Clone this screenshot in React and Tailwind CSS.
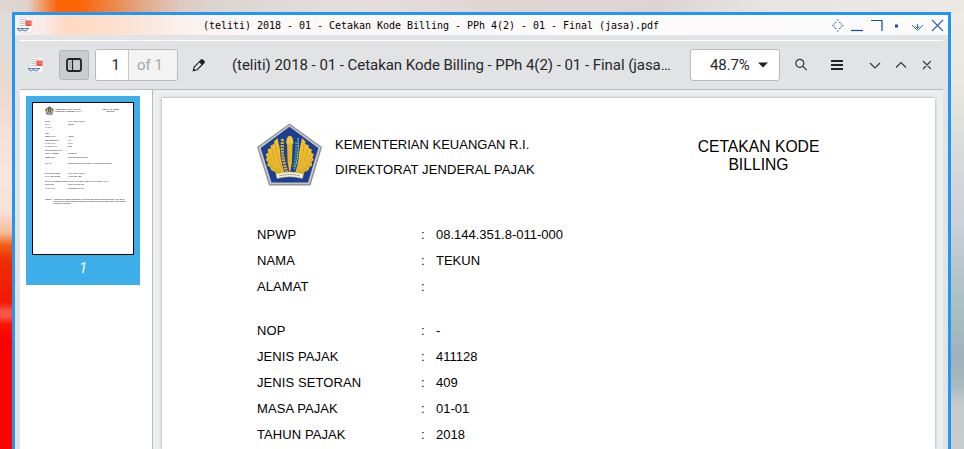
import React from "react";

const rows = [
  ["NPWP", "08.144.351.8-011-000"],
  ["NAMA", "TEKUN"],
  ["ALAMAT", ""],
  null,
  ["NOP", "-"],
  ["JENIS PAJAK", "411128"],
  ["JENIS SETORAN", "409"],
  ["MASA PAJAK", "01-01"],
  ["TAHUN PAJAK", "2018"],
];

function Emblem({ className }) {
  const wing = (
    <>
      <path
        d="M20.500 15 17 18.500 17.300 21 13.500 22.500 14 25 10.500 26.500 11.300 29.500 8.500 31.500 10 34 8.800 37 11 39 10.300 42.500 13 44 14 47 18 49 20 52.500H31L26.500 44 24 31Z"
        fill="#f0be2c"
      />
      <path
        d="M18.500 21.500q.5 15 9.500 29M15 26q1.500 14 12 25M12 31q3 11.500 14 20M11 36q4 9 14 15.500M12 41q4 6 12 10.500"
        fill="none"
        stroke="#a58a30"
        strokeWidth=".5"
      />
    </>
  );
  return (
    <svg viewBox="0 0 66 64" className={className}>
      <path d="M32.500.5 65 24 53.500 62.500H12L0 24Z" fill="#8f9194" />
      <path d="M32.500 2 63.500 24.500 52.500 61H13L1.500 24.500Z" fill="#c5c7c9" />
      <path d="M32.500 3.800 61.300 25 51 59.500H14.500L3.700 25Z" fill="#1c3f8f" />
      {wing}
      <g transform="translate(65.500 0) scale(-1 1)">{wing}</g>
      <path d="M25.500 17q-1.500 18 4.500 32" fill="none" stroke="#1c3f8f" strokeWidth="4.600" />
      <path d="M25.500 16q-1.500 18 4.500 33" fill="none" stroke="#d5ae45" strokeWidth="3.200" strokeDasharray="2 .9" />
      <path d="M40 17q1 18-4 32" fill="none" stroke="#1c3f8f" strokeWidth="4.600" />
      <path d="M41 15q1.300 19-4 32" fill="none" stroke="#e6f0d8" strokeWidth="1" strokeDasharray="1.500 .8" />
      <path d="M39.300 19q.5 14-3 26" fill="none" stroke="#2fa07b" strokeWidth="2.200" strokeDasharray="2 .9" />
      <path d="M30 18h5.600l-.6 21-2.200 12-2.200-12Z" fill="#f0b925" />
      <path d="M29 20.500 30 15q2.800-4.500 5.600 0l1 5.500Z" fill="#f3c63a" />
      <path d="M31.800 22v18M34 22v18" stroke="#d29c1c" strokeWidth=".4" />
      <path d="M19 51q13.500-4 27.500 0l-1 4.500q-12.800-3.500-25.500 0Z" fill="#f4f1dc" stroke="#c9a84c" strokeWidth=".5" />
      <path d="M22.500 52.800q10.500-2.500 20.500 0" fill="none" stroke="#777" strokeWidth="1" strokeDasharray="1.200 .5" />
    </svg>
  );
}

function ViewerIcon({ className }) {
  return (
    <svg viewBox="0 0 16 16" className={className}>
      <rect x="2" y=".5" width="13" height="15" rx=".6" fill="#f7f7f7" stroke="#dedede" strokeWidth=".5" />
      <path d="M3 2.500h6M3 4.500h5M3 6.500h5M3 8.500h5" stroke="#b9b9b9" strokeWidth=".8" />
      <rect x="8.500" y="3.500" width="6" height="5.500" fill="#ea5548" />
      <path d="M10 7.500l2-3 1.500 3" fill="none" stroke="#f7b5ae" strokeWidth=".6" />
      <path d="M0 11.500h12" stroke="#416da8" strokeWidth="1" />
      <path d="M1 11.700q0 2.300 2 2.300t2.500-2.300q0 2.300 2.500 2.300t2.500-2.300" fill="#d5e4f5" stroke="#416da8" strokeWidth=".8" />
    </svg>
  );
}

function TitleBar() {
  return (
    <div className="relative flex h-5 shrink-0 items-center justify-between bg-[linear-gradient(90deg,#f7f3f2_0px,#f8eae5_30px,#ffd9c3_50px,#ffdcc9_80px,#fbe5d9_125px,#faf1ed_170px,#fcf9f8_240px,#fbf8f7_380px,#fdfcfb_550px,#fbfbfa_933px)]">
      <ViewerIcon className="ml-0.5 h-4 w-4" />
      <span className="absolute left-[188px] top-0 whitespace-pre font-['DejaVu_Sans_Mono',monospace] text-[10px] leading-[21px] tracking-[-0.02px] text-black">
        (teliti) 2018 - 01 - Cetakan Kode Billing - PPh 4(2) - 01 - Final (jasa).pdf
      </span>
      <svg width="114" height="13" viewBox="0 0 114 13" className="mr-[3px]" fill="none" stroke="#124ba5">
        <path
          d="M6 1h1.500M6 12h1.500M1 6.500h1.500M11 6.500h1.500M4 3.500h1.500M8 3.500h1.500M4 9.500h1.500M8 9.500h1.500M2.500 5H4M9.500 5H11M2.500 8H4M9.500 8H11"
          stroke="#3f70bd"
          strokeWidth="1.200"
        />
        <path d="M20 11.500h12" strokeWidth="1.200" />
        <path d="M40 1.500h11V12" strokeWidth="1.200" />
        <path d="M64 7h3" strokeWidth="3" />
        <path d="m81 6 5.500 5.500L92 6M84.500 7.500l2 2 2-2M86.500 5v4" stroke="#3767b8" strokeWidth="1" />
        <path d="m101 1 11 11M112 1l-11 11" stroke="#2c60b4" strokeWidth="1.100" />
      </svg>
    </div>
  );
}

function Toolbar() {
  return (
    <div className="flex h-[50px] items-center border-b border-t border-b-[#babbbc] border-t-white bg-[#e2e3e5] font-['Roboto',sans-serif] text-[#25272b]">
      <ViewerIcon className="ml-2 h-4 w-4" />
      <button className="ml-[15px] flex h-[30px] w-[30px] items-center justify-center rounded-[3px] border border-[#b4b5b7] bg-[#c9cbcf]">
        <svg width="16" height="14" viewBox="0 0 16 14" fill="none" stroke="#202226">
          <rect x="1" y="1" width="14" height="12" rx="2" strokeWidth="1.800" />
          <path d="M6.500 2v10" strokeWidth="1.200" />
          <path d="M3 4.500h1.500M3 7h1.500M3 9.500h1.500" stroke="#85878a" strokeWidth=".8" />
        </svg>
      </button>
      <div className="ml-1.5 flex h-8 w-[83px] overflow-hidden rounded-[3px] border border-[#babbbc] bg-[#f3f3f3] text-[15px] leading-[31px]">
        <span className="w-[33px] border-r border-[#c6c7c8] bg-white pr-2 text-right">1</span>
        <span className="pl-2 text-[#a5a6a7]">of 1</span>
      </div>
      <svg width="14" height="14" viewBox="0 0 14 14" className="ml-3.5" fill="none" stroke="#202226">
        <path d="M1.300 12.700 2.300 8.800 7.500 3.700 10.300 6.500 5.200 11.700Z" strokeWidth="1.100" />
        <path d="m6.800 3.400 2.400-2.200q.9-.6 1.700.2l1.800 1.800q.7.800 0 1.600l-2.200 2.400Z" fill="#202226" stroke="none" />
        <path d="m1 13 .6-2.400 1.800 1.800Z" fill="#202226" stroke="none" />
      </svg>
      <span className="ml-[26px] w-[458px] whitespace-nowrap text-[15px] leading-8 tracking-[-0.045px]">
        (teliti) 2018 - 01 - Cetakan Kode Billing - PPh 4(2) - 01 - Final (jasa…
      </span>
      <button className="flex h-8 w-[90px] items-center rounded-[3px] border border-[#babbbc] bg-white pl-[19px] text-[15px] tracking-[-0.1px]">
        <span className="w-12 text-left">48.7%</span>
        <svg width="10" height="6" viewBox="0 0 10 6" className="shrink-0"><path d="M0 .5h10L5 5.500Z" fill="#202226" /></svg>
      </button>
      <svg width="136" height="14" viewBox="0 0 136 14" className="ml-[15px]" fill="none" stroke="#35373a" strokeWidth="1.200">
        <circle cx="4.800" cy="5.300" r="4" />
        <path d="m7.700 8.200 4 4" />
        <path d="M36 3h12M36 7h12M36 11h12" stroke="#202226" strokeWidth="2" />
        <path d="m75 5 5 5 5-5M101 9.500l5-5 5 5M128 3l8 8M136 3l-8 8" />
      </svg>
    </div>
  );
}

const thumbRows = [
  ["NPWP", "08.144.351.8-011-000", "h-[3.4px]"],
  ["NAMA", "TEKUN", "h-[3.4px]"],
  ["ALAMAT", "", "h-[5.600px]"],
  ["NOP", "-", "h-[3.4px]"],
  ["JENIS PAJAK", "411128", "h-[3.4px]"],
  ["JENIS SETORAN", "409", "h-[3.4px]"],
  ["MASA PAJAK", "01-01", "h-[3.4px]"],
  ["TAHUN PAJAK", "2018", "h-[3.4px]"],
  ["NOMOR KETETAPAN", "-", "h-[3.4px]"],
  ["JUMLAH SETOR", "Rp 750.000", "h-[3.4px]"],
  ["TERBILANG", "Tujuh Ratus Ribu Rupiah", "h-[6.800px]"],
  ["URAIAN", "Setoran Masa PPh Final Pasal 4 (2) atas jasa konstruksi", "h-[9.300px]"],
  ["NPWP PENYETOR", "08.144.351.8-011-000", "h-[3.4px]"],
  ["NAMA PENYETOR", "ALPRIANDI ABDI", "h-[3.4px]"],
];

function Thumbnail() {
  return (
    <div className="h-[189px] w-[114px] bg-[#3daee9] px-1.5 pt-1.5">
      <div className="flex h-[153px] flex-col overflow-hidden border border-black bg-white px-3 pt-[3px] font-['Liberation_Sans',sans-serif] text-[1.75px] leading-[2.600px] text-black">
        <div className="flex h-[13.500px] shrink-0 items-start">
          <Emblem className="h-[9px] w-[9px]" />
          <div className="ml-[1.500px] w-[46px] pt-[1.500px]">
            KEMENTERIAN KEUANGAN R.I.<br />DIREKTORAT JENDERAL PAJAK
          </div>
          <div className="w-[18px] whitespace-nowrap pt-[1.500px] text-center text-[2.100px]">CETAKAN KODE<br />BILLING</div>
        </div>
        {thumbRows.map(([label, value, height]) => (
          <div key={label} className={`flex shrink-0 whitespace-nowrap ${height}`}>
            <span className="w-[21px]">{label}</span>
            <span className="whitespace-pre">{`:   ${value}`}</span>
          </div>
        ))}
        <div className="mt-[1.500px] whitespace-nowrap">GUNAKAN KODE BILLING DI BAWAH INI UNTUK MELAKUKAN PEMBAYARAN</div>
        <div className="mt-[.9px] flex"><span className="w-[21px]">ID BILLING</span><span className="whitespace-pre">:   0180 1980 0111 125</span></div>
        <div className="mt-[.9px] flex"><span className="w-[21px]">MASA AKTIF</span><span className="whitespace-pre">:   11/02/2018 06:14:50</span></div>
        <div className="mt-[8px] flex w-[82px] leading-[2px]">
          <span className="w-2 shrink-0">Catatan :</span>
          <span>Apabila ada kesalahan dalam isian Kode Billing atau masa berlakunya berakhir, Kode Billing dapat dibuat kembali. Tanggung jawab isian Kode Billing ada pada Wajib Pajak yang namanya tercantum di dalamnya.</span>
        </div>
      </div>
      <div className="pt-[3px] text-center font-['Roboto',sans-serif] text-[15px] italic leading-[21px] text-white">1</div>
    </div>
  );
}

function DocumentPage() {
  return (
    <div className="h-[351px] w-[773px] bg-white pl-[95px] pt-[25px] font-['Liberation_Sans',sans-serif] text-[13px] text-black shadow-[0_0_3px_rgba(0,0,0,0.35)]">
      <div className="flex h-[99px]">
        <Emblem className="h-[64px] w-[66px]" />
        <div className="ml-3 w-[340px] pt-[9px] leading-[25px]">
          <div>KEMENTERIAN KEUANGAN R.I.</div>
          <div className="tracking-[0.1px]">DIREKTORAT JENDERAL PAJAK</div>
        </div>
        <div className="w-[167px] pt-[15px] text-center text-[15.700px] leading-[18px]">
          <div>CETAKAN KODE</div>
          <div>BILLING</div>
        </div>
      </div>
      {rows.map((row, i) =>
        row ? (
          <div key={i} className="flex h-[26px] items-center">
            <span className="w-[164px] tracking-[0.08px]">{row[0]}</span>
            <span className="w-[15px]">:</span>
            <span>{row[1]}</span>
          </div>
        ) : (
          <div key={i} className="h-[18px]" />
        )
      )}
    </div>
  );
}

export default function App() {
  return (
    <div className="grid h-[449px] w-[964px] grid-cols-[12px_939px_13px] grid-rows-[12px_437px] overflow-hidden bg-[#e9e4e1]">
      <div className="col-span-3 bg-[linear-gradient(90deg,#ddd6d3_0px,#dfd2cb_28px,#ee9b66_42px,#fb6407_58px,#fb6506_80px,#ec8545_110px,#e2aa8b_145px,#dfc9c0_180px,#ddd5d2_220px,#e6dedb_360px,#e0d4d1_500px,#ddd4d2_660px,#e9e6e1_780px,#ece9e4_964px)]" />
      <div className="bg-[linear-gradient(180deg,#dfdbd9_0px,#e0dcd9_30px,#ead9cf_75px,#f6dfd4_120px,#fce5dd_165px,#fbe0d5_200px,#f5bb98_221px,#f15f18_233px,#ef2c02_249px,#f41701_290px,#f65345_299px,#f65a4d_304px,#fa1506_312px,#fe0000_328px,#fe0000_437px)]" />
      <div className="flex flex-col overflow-hidden border-x-[3px] border-t-[3px] border-[#2196f3] bg-[#e2e3e5]">
        <TitleBar />
        <div className="mx-[5px] mt-[5px] flex flex-1 flex-col">
          <Toolbar />
          <div className="flex flex-1 overflow-hidden bg-[#edeef0]">
            <div className="w-[133px] shrink-0 border-r border-[#b9babb] bg-white pl-1.5 pt-1.5">
              <Thumbnail />
            </div>
            <div className="pl-[9px] pt-2">
              <DocumentPage />
            </div>
          </div>
        </div>
      </div>
      <div className="bg-[linear-gradient(180deg,#edeae5_0px,#e8e7e1_70px,#d9dddb_130px,#d0d3d8_185px,#ccd0da_210px,#b6c4cb_260px,#a9c0c2_295px,#9fb2bb_345px,#a9b9be_375px,#c4cacb_390px,#c9cdcd_437px)]" />
    </div>
  );
}
